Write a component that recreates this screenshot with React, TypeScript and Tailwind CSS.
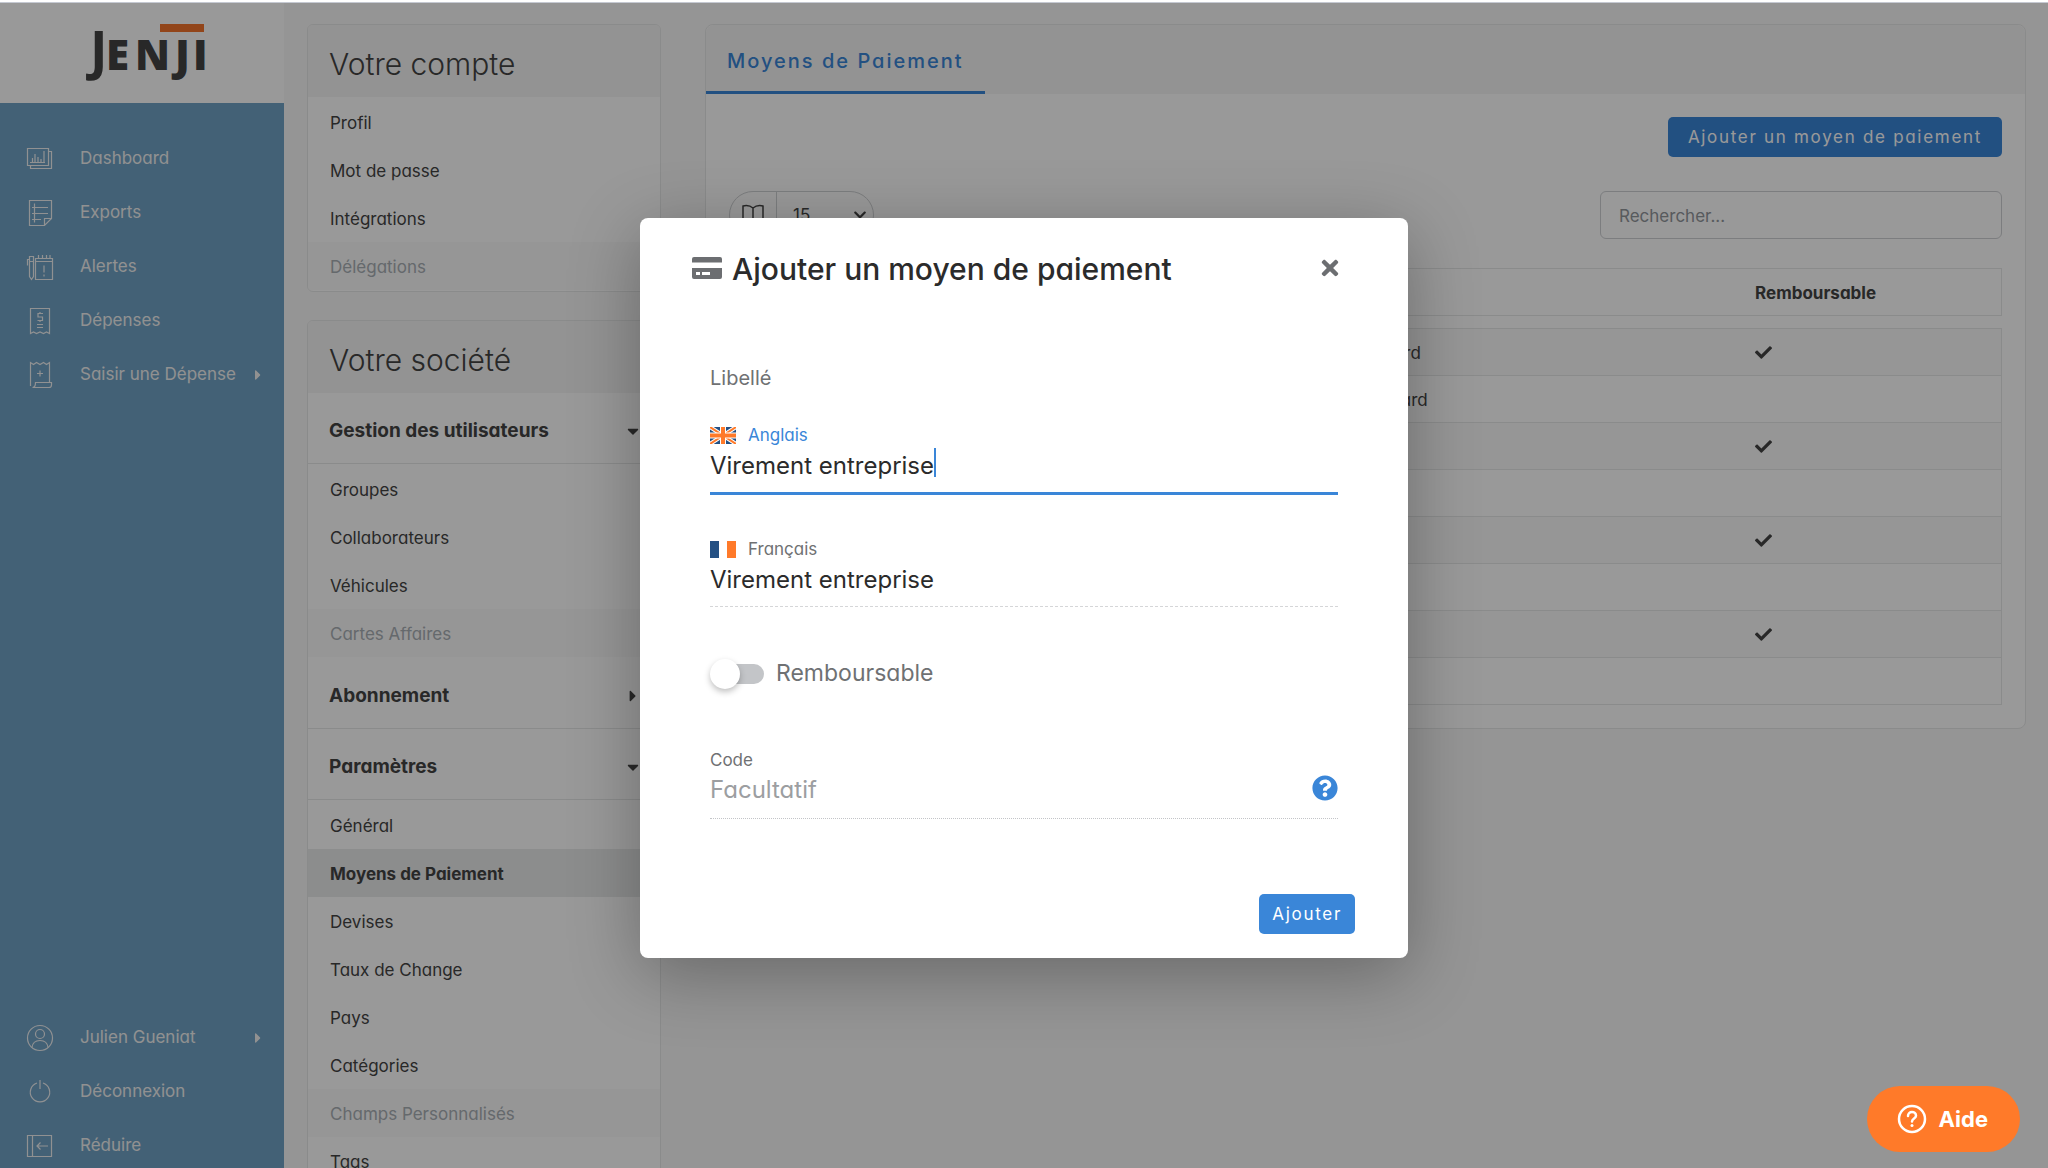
import React, { useState } from 'react';
import { FaCaretDown, FaCaretRight, FaCheck, FaChevronDown, FaQuestionCircle, FaTimes } from 'react-icons/fa';

interface NavItem {
  label: string;
  icon: React.ReactNode;
  hasChildren?: boolean;
}

interface SettingsItem {
  label: string;
  state?: 'active' | 'disabled';
}

interface PaymentMethod {
  name: string;
  refundable: boolean;
}

const MAIN_NAV: NavItem[] = [
  {
    label: 'Dashboard',
    icon: (
      <>
        <path d="M1.5 3.5h21v17h-21z" />
        <path d="M22.5 6.5h3v17h-21v-3M4 17.5h15M6.5 17v-4M9 17V9M12 17v-5M15 17v-3M18 17V6" />
      </>
    ),
  },
  {
    label: 'Exports',
    icon: <path d="M3.5 1.5h22v18l-7 7h-15zM25.5 19.5h-7v7M8.5 4.5v19M6 8.5h16M6 14.5h16M6 20.5h9" />,
  },
  {
    label: 'Alertes',
    icon: (
      <>
        <path d="M9.5 5.5h17v21h-17zM9.5 8.5h17M12.5 2v3M16.5 2v3M20.5 2v3M24 2v3M18 12.5v7M18 21.5v2" />
        <path d="M3.5 3.5h4v20l-2 3-2-3zM3.5 6.5h-2v6M3.5 8.5h4" />
      </>
    ),
  },
  {
    label: 'Dépenses',
    icon: (
      <>
        <path d="M4.5 1.5h19v25l-3-1.5-3 1.5-3.5-1.5-3.5 1.5-3-1.5-3 1.5z" />
        <path d="M17 6.5h-5v3.500h4.500v3.500h-5M14 5v2M14 13v2M11 17.500h6M11 20.500h6" />
      </>
    ),
  },
  {
    label: 'Saisir une Dépense',
    icon: (
      <>
        <path d="M4.500 25V1.500l3 2 3-2 3.500 2 3.500-2 3 2 3-2v20M14 9.500v6M11 12.500h6" />
        <path d="M9.500 21.500h16v2.500c0 1.500-1 2.500-2.500 2.500H6.500c3 0 3-2.500 3-5z" />
      </>
    ),
    hasChildren: true,
  },
];

const USER_NAV: NavItem[] = [
  {
    label: 'Julien Gueniat',
    icon: (
      <>
        <circle cx="14" cy="14" r="12.5" />
        <circle cx="14" cy="10" r="4.5" />
        <path d="M6 23.500c.5-4.500 3.500-7 8-7s7.500 2.500 8 7" />
      </>
    ),
    hasChildren: true,
  },
  {
    label: 'Déconnexion',
    icon: <path d="M11 5a9.700 9.700 0 1 0 6 0M14 2v9" />,
  },
  {
    label: 'Réduire',
    icon: <path d="M1.500 3.500h24v21h-24zM6.500 3.500v21M22 14H11M14.500 10.500 11 14l3.500 3.500" />,
  },
];

const ACCOUNT_ITEMS: SettingsItem[] = [
  { label: 'Profil' },
  { label: 'Mot de passe' },
  { label: 'Intégrations' },
  { label: 'Délégations', state: 'disabled' },
];

const USER_ITEMS: SettingsItem[] = [
  { label: 'Groupes' },
  { label: 'Collaborateurs' },
  { label: 'Véhicules' },
  { label: 'Cartes Affaires', state: 'disabled' },
];

const PARAM_ITEMS: SettingsItem[] = [
  { label: 'Général' },
  { label: 'Moyens de Paiement', state: 'active' },
  { label: 'Devises' },
  { label: 'Taux de Change' },
  { label: 'Pays' },
  { label: 'Catégories' },
  { label: 'Champs Personnalisés', state: 'disabled' },
  { label: 'Tags' },
];

const METHODS: PaymentMethod[] = [
  { name: 'Personal Card', refundable: true },
  { name: 'Company Card', refundable: false },
  { name: '', refundable: true },
  { name: '', refundable: false },
  { name: '', refundable: true },
  { name: '', refundable: false },
  { name: '', refundable: true },
  { name: '', refundable: false },
];

const ITEM_STYLE = {
  default: 'text-[#444]',
  active: 'bg-[#eaebec] font-bold text-[#444]',
  disabled: 'bg-[#fafafa] text-[#a9afb5]',
};

function Logo() {
  return (
    <svg viewBox="0 0 124 64" className="h-16 w-31 overflow-visible" role="img" aria-label="Jenji">
      <rect x="76" y="2" width="44" height="8" fill="#f4732c" />
      <g fill="#444" className="font-['Open_Sans']">
        <text x="6" y="48" fontSize="53" fontWeight="700">J</text>
        <text x="22 51 91 109" y="48" fontSize="42" fontWeight="800">ENJI</text>
      </g>
    </svg>
  );
}

function NavLink({ item }: { item: NavItem }) {
  return (
    <a href="#" className="flex h-12 items-center pt-1 pr-[18px] pl-[26px] text-[17px] text-[#f2f2f2]">
      <svg viewBox="0 0 28 28" className="mr-[26px] size-7 shrink-0 text-[#f0f2f4]" fill="none" stroke="currentColor" strokeWidth="1.2">
        {item.icon}
      </svg>
      <span className="flex-1 whitespace-nowrap">{item.label}</span>
      {item.hasChildren && <FaCaretRight className="size-4" />}
    </a>
  );
}

function Sidebar() {
  return (
    <aside className="flex w-[284px] shrink-0 flex-col bg-[#70a2c5]">
      <div className="flex h-[100px] justify-center bg-white pt-[19px] pl-2">
        <Logo />
      </div>
      <nav className="flex flex-1 flex-col gap-1.5 pt-[30px]">
        {MAIN_NAV.map((item) => <NavLink key={item.label} item={item} />)}
        <div className="flex-1" />
        {USER_NAV.map((item) => <NavLink key={item.label} item={item} />)}
      </nav>
    </aside>
  );
}

function SettingsCard({ title, children }: { title: string; children: React.ReactNode }) {
  return (
    <section className="overflow-hidden rounded-md border border-[#e7e8e8] bg-white">
      <h2 className="bg-[#f5f5f5] px-[21px] pt-[19px] pb-[13px] text-[30px] leading-10 font-light text-[#444]">{title}</h2>
      {children}
    </section>
  );
}

function SettingsList({ items }: { items: SettingsItem[] }) {
  return (
    <ul className="py-px">
      {items.map((item) => (
        <li key={item.label}>
          <a href="#" className={`block px-[22px] pt-[13px] pb-[11px] text-[17px] leading-6 ${ITEM_STYLE[item.state ?? 'default']}`}>
            {item.label}
          </a>
        </li>
      ))}
    </ul>
  );
}

function SettingsGroup({ title, items }: { title: string; items?: SettingsItem[] }) {
  const Caret = items ? FaCaretDown : FaCaretRight;
  return (
    <>
      <button
        type="button"
        aria-expanded={!!items}
        className="flex h-[71px] w-full items-center justify-between border-b border-[#e7e8e8] pt-1.5 pr-[18px] pl-[21px] text-[19px] font-bold text-[#444]"
      >
        {title}
        <Caret className="size-[18px]" />
      </button>
      {items && <SettingsList items={items} />}
    </>
  );
}

function PaymentMethods() {
  return (
    <section className="rounded-lg border border-[#e7e8e8] bg-white">
      <div className="flex rounded-t-lg bg-[#f5f5f5]">
        <a
          href="#"
          className="border-b-3 border-[#3a86d8] px-[21px] pt-6 pb-[18px] text-[20px] leading-6 font-medium tracking-widest text-[#3a86d8]"
        >
          Moyens de Paiement
        </a>
      </div>
      <div className="p-[23px]">
        <div className="flex justify-end">
          <button type="button" className="h-10 rounded-[5px] bg-[#3a86d8] px-5 pt-0.5 text-[17px] tracking-widest text-white">
            Ajouter un moyen de paiement
          </button>
        </div>
        <div className="mt-[34px] flex items-center justify-between">
          <label className="flex h-12 items-center rounded-full border border-[#cfd2d4] text-[17px] text-[#444]">
            <span className="flex h-full items-center border-r border-[#cfd2d4] pr-3 pl-3">
              <svg viewBox="0 0 22 22" className="size-[22px]" fill="none" stroke="currentColor" strokeWidth="1.5">
                <path d="M1 2c4-1 7-.5 10 2 3-2.500 6-3 10-2v16c-4-1-7-.5-10 2-3-2.500-6-3-10-2zM11 4v16" />
              </svg>
            </span>
            <span className="relative flex items-center">
              <select aria-label="Lignes par page" defaultValue="15" className="w-24 appearance-none pt-0.5 pl-4">
                <option>15</option>
                <option>30</option>
              </select>
              <FaChevronDown className="pointer-events-none absolute right-1.5 size-3.5" />
            </span>
          </label>
          <input
            type="search"
            aria-label="Rechercher"
            placeholder="Rechercher..."
            className="h-12 w-[402px] rounded-md border border-[#cfd1d4] px-[18px] pt-0.5 text-[17px] placeholder:text-[#92969b]"
          />
        </div>
        <table className="mt-[29px] w-full table-fixed border-collapse text-left text-[17px] text-[#444]">
          <colgroup>
            <col />
            <col className="w-[35%]" />
            <col className="w-1/5" />
          </colgroup>
          <thead className="border border-[#e7e8e8]">
            <tr className="h-[47px]">
              <th className="px-2 pt-1">Nom</th>
              <th className="px-2 pt-1">Type</th>
              <th className="px-2 pt-1">Remboursable</th>
            </tr>
          </thead>
          <tbody aria-hidden="true">
            <tr className="h-[13px]" />
          </tbody>
          <tbody className="border border-[#e7e8e8]">
            {METHODS.map((m, i) => (
              <tr key={i} className="h-[47px] border-b border-[#e7e8e8] odd:bg-[#fafafa]">
                <td />
                <td className="px-1 pt-1">{m.name}</td>
                <td className="px-2">{m.refundable && <FaCheck className="size-[17px]" />}</td>
              </tr>
            ))}
          </tbody>
        </table>
      </div>
    </section>
  );
}

function FlagUk() {
  return (
    <svg viewBox="0 0 26 17" className="h-[17px] w-[26px]">
      <path fill="#245083" d="M0 0h26v17H0z" />
      <path stroke="#fff" strokeWidth="4" d="m0 0 26 17M26 0 0 17" />
      <path stroke="#ff7a2a" strokeWidth="2" d="m0 0 26 17M26 0 0 17" />
      <path stroke="#fff" strokeWidth="6" d="M13 0v17M0 8.500h26" />
      <path stroke="#ff7a2a" strokeWidth="4" d="M13 0v17M0 8.500h26" />
    </svg>
  );
}

function FlagFr() {
  return (
    <svg viewBox="0 0 26 17" className="h-[17px] w-[26px]">
      <path fill="#245083" d="M0 0h9v17H0z" />
      <path fill="#ff7a2a" d="M17 0h9v17h-9z" />
    </svg>
  );
}

function CardIcon() {
  return (
    <svg viewBox="0 0 30 22" className="h-[22px] w-[30px] text-[#6c6e71]">
      <path fill="currentColor" d="M2 0h26a2 2 0 0 1 2 2v3.500H0V2a2 2 0 0 1 2-2z" />
      <path
        fill="currentColor"
        fillRule="evenodd"
        d="M0 11h30v9a2 2 0 0 1-2 2H2a2 2 0 0 1-2-2zM4 15v3h4v-3zM10 15v3h8v-3z"
      />
    </svg>
  );
}

function AddMethodDialog() {
  const [english, setEnglish] = useState('Virement entreprise');
  const [french, setFrench] = useState('Virement entreprise');

  return (
    <form
      role="dialog"
      aria-labelledby="dialog-title"
      className="w-[768px] rounded-lg bg-white pt-[30px] pb-6 text-[#2b2b2b] shadow-[0_16px_70px_rgba(0,0,0,0.3)]"
    >
      <header className="flex h-10 items-center pr-[66px] pl-[52px]">
        <CardIcon />
        <h1 id="dialog-title" className="ml-2.5 flex-1 pt-0.5 text-[30px] leading-10 font-medium">Ajouter un moyen de paiement</h1>
        <button type="button" aria-label="Fermer">
          <FaTimes className="size-6 text-[#6c6e71]" />
        </button>
      </header>

      <div className="px-[70px] pt-[78px] text-[#6f7173]">
        <p className="text-[20px] leading-6">Libellé</p>

        <label htmlFor="label-en" className="mt-[34px] flex h-6 items-center gap-3 text-[17px] text-[#3a86d8]">
          <FlagUk />
          Anglais
        </label>
        <div className="flex border-b-3 border-[#3a86d8] pb-2">
          <input
            id="label-en"
            value={english}
            onChange={(e) => setEnglish(e.target.value)}
            className="field-sizing-content h-9 text-2xl text-[#2b2b2b] outline-none"
          />
          <span className="h-[29px] w-0.5 bg-[#3a86d8]" />
        </div>

        <label htmlFor="label-fr" className="mt-[43px] flex h-6 items-center gap-3 text-[17px]">
          <FlagFr />
          Français
        </label>
        <div className="border-b border-dashed border-[#d5d6d8] pb-2">
          <input
            id="label-fr"
            value={french}
            onChange={(e) => setFrench(e.target.value)}
            className="block h-9 w-full text-2xl text-[#2b2b2b] outline-none"
          />
        </div>

        <label className="mt-[51px] flex h-8 items-center gap-3 text-[23px]">
          <input
            type="checkbox"
            role="switch"
            className="flex h-5 w-[54px] appearance-none items-center rounded-full bg-linear-to-r from-white from-20% to-[#c3c5c8] to-20% before:size-[30px] before:shrink-0 before:rounded-full before:bg-white before:shadow-[0_3px_6px_rgba(0,0,0,0.25)]"
          />
          Remboursable
        </label>

        <label htmlFor="code" className="mt-[58px] block text-[17px] leading-6">Code</label>
        <div className="flex items-start border-b border-dotted border-[#c3c5c8] pb-2.5">
          <input
            id="code"
            placeholder="Facultatif"
            className="h-9 flex-1 text-2xl outline-none placeholder:text-[#9c9ea1]"
          />
          <button type="button" aria-label="Aide sur le code" className="pt-[3px]">
            <FaQuestionCircle className="size-[26px] text-[#3a86d8]" />
          </button>
        </div>
      </div>

      <footer className="flex justify-end pt-[75px] pr-[53px]">
        <button type="submit" className="h-10 rounded-[5px] bg-[#3a86d8] px-[13px] pt-0.5 text-[17px] tracking-widest text-white">
          Ajouter
        </button>
      </footer>
    </form>
  );
}

export default function App() {
  return (
    <div className="flex h-screen flex-col overflow-hidden bg-white font-['Inter',sans-serif] [font-feature-settings:'cv11']">
      <div className="h-[3px] shrink-0 border-b border-[#c5c9d2]" />
      <div className="relative flex min-h-0 flex-1 bg-[#f8f8f8]">
        <Sidebar />
        <main className="flex flex-1 items-start gap-11 overflow-hidden pt-[21px] pr-[22px] pl-[23px]">
          <div className="flex w-[354px] shrink-0 flex-col gap-7">
            <SettingsCard title="Votre compte">
              <SettingsList items={ACCOUNT_ITEMS} />
            </SettingsCard>
            <SettingsCard title="Votre société">
              <SettingsGroup title="Gestion des utilisateurs" items={USER_ITEMS} />
              <SettingsGroup title="Abonnement" />
              <SettingsGroup title="Paramètres" items={PARAM_ITEMS} />
            </SettingsCard>
          </div>
          <div className="min-w-0 flex-1">
            <PaymentMethods />
          </div>
        </main>

        <div className="absolute inset-0 flex items-center justify-center bg-black/40 pt-1">
          <AddMethodDialog />
        </div>

        <button
          type="button"
          className="absolute right-7 bottom-4 flex h-[66px] items-center gap-3 rounded-full bg-[#ff7a29] pr-8 pl-[30px] text-[22px] font-bold text-white"
        >
          <svg viewBox="0 0 30 30" className="size-[30px]" fill="none" stroke="currentColor" strokeWidth="2.5">
            <circle cx="15" cy="15" r="13" />
            <path strokeLinecap="round" d="M11 12c0-2.500 1.800-4 4-4s4 1.500 4 3.700c0 2.800-4 2.800-4 5.800" />
            <circle cx="15" cy="21.5" r="1.5" fill="currentColor" stroke="none" />
          </svg>
          Aide
        </button>
      </div>
    </div>
  );
}
